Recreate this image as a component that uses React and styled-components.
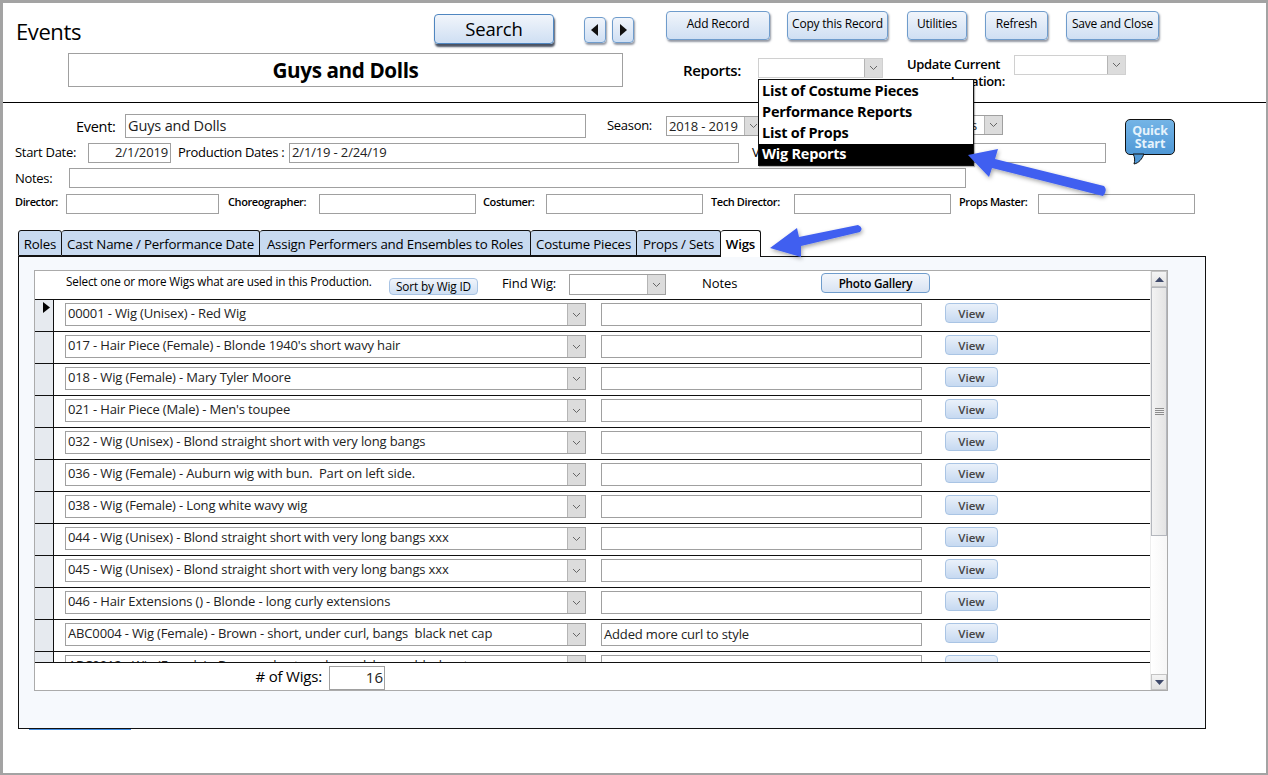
import React from 'react';
import styled, { createGlobalStyle } from 'styled-components';

const GlobalStyle = createGlobalStyle`
  html, body { margin: 0; padding: 0; background: #fff; }
  body { font-family: "Open Sans", "Noto Sans", sans-serif; color: #000; }
`;

const Frame = styled.div`
  position: relative;
  box-sizing: border-box;
  width: 1268px;
  height: 775px;
  overflow: hidden;
  background: #fff;
  border: solid #a3a3a3;
  border-width: 3px 2px 2px 3px;
`;

const Header = styled.header`
  box-sizing: border-box;
  height: 100px;
  border-bottom: 1px solid #000;
  display: flex;
`;

const HeaderLeft = styled.div`
  width: 663px;
  padding-left: 13px;
  box-sizing: border-box;
`;

const TitleRow = styled.div`
  display: flex;
  align-items: flex-start;
  height: 50px;
`;

const PageTitle = styled.h1`
  margin: 14px 0 0;
  width: 418px;
  font-size: 22px;
  line-height: 28px;
  font-weight: 500;
  letter-spacing: -0.4px;
`;

const RaisedButton = styled.button`
  box-sizing: border-box;
  padding: 0;
  font-family: inherit;
  color: #000;
  border: 1px solid #6f9ccc;
  border-radius: 4px;
  background: linear-gradient(#f1f5fb, #cfdff3);
  box-shadow: 1px 2px 2px rgba(60, 70, 90, 0.55);
`;

const SearchButton = styled(RaisedButton)`
  width: 120px;
  height: 30px;
  margin-top: 11px;
  padding-bottom: 2px;
  font-size: 18.5px;
  font-weight: 500;
  letter-spacing: -0.2px;
  border-color: #4f86c0;
  box-shadow: 1px 3px 2px rgba(30, 40, 60, 0.8);
`;

const NavGroup = styled.div`
  display: flex;
  gap: 6px;
  margin: 14px 0 0 30px;
`;

const NavButton = styled(RaisedButton)`
  width: 22px;
  height: 26px;
  display: flex;
  align-items: center;
  justify-content: center;
`;

const TitleBox = styled.div`
  box-sizing: border-box;
  width: 555px;
  height: 34px;
  margin-left: 52px;
  border: 1px solid #a0a0a0;
  font-size: 20.7px;
  font-weight: 700;
  line-height: 32px;
  letter-spacing: -0.4px;
  text-align: center;
`;

const HeaderRight = styled.div`
  flex: 1;
`;

const ActionRow = styled.div`
  display: flex;
  padding-top: 8px;
`;

const ActionButton = styled(RaisedButton)`
  width: ${p => p.$w}px;
  height: 29px;
  margin-right: ${p => p.$gap}px;
  padding-bottom: 4px;
  font-size: 12px;
  font-weight: 500;
  letter-spacing: -0.2px;
`;

const ReportsRow = styled.div`
  display: flex;
  align-items: flex-start;
  margin-top: 15px;
`;

const ReportsLabel = styled.div`
  margin: 5px 0 0 17px;
  width: 75px;
  font-size: 15px;
  line-height: 20px;
  font-weight: 600;
  letter-spacing: -0.3px;
`;

const Combo = styled.div`
  box-sizing: border-box;
  flex: none;
  display: flex;
  width: ${p => p.$w}px;
  height: ${p => p.$h || 20}px;
  margin-top: ${p => p.$top || 0}px;
  margin-left: ${p => p.$left || 0}px;
  border: 1px solid ${p => p.$soft ? '#d0d0d0' : '#a0a0a0'};
  background: #fff;
`;

const ComboText = styled.div`
  flex: 1;
  min-width: 0;
  padding: 0 ${p => p.$align === 'right' ? 7 : 0}px 0 2px;
  overflow: hidden;
  white-space: pre;
  font-size: ${p => p.$size || 13}px;
  line-height: ${p => p.$line || 18}px;
  letter-spacing: -0.15px;
  color: #222;
  text-align: ${p => p.$align || 'left'};
`;

const ComboArrow = styled.div`
  flex: 0 0 17px;
  display: flex;
  align-items: center;
  justify-content: center;
  background: #dcdcdc;
  border-left: 1px solid #b5b5b5;
`;

const UpdateLabel = styled.div`
  width: 98px;
  margin: 1px 9px 0 24px;
  font-size: 13px;
  line-height: 17px;
  font-weight: 600;
  letter-spacing: -0.35px;
  text-align: right;
  white-space: nowrap;
`;

const UpdateFirstLine = styled.div`
  padding-right: 5px;
`;

const FormArea = styled.section`
  padding: 11px 0 0 12px;
`;

const FormRow = styled.div`
  display: flex;
  align-items: flex-start;
  height: ${p => p.$h}px;
`;

const FieldLabel = styled.div`
  box-sizing: border-box;
  flex: none;
  width: ${p => p.$w}px;
  padding: ${p => p.$top || 0}px 0 0 ${p => p.$pad || 0}px;
  font-size: 13px;
  line-height: 18px;
  letter-spacing: -0.3px;
  white-space: nowrap;
  font-weight: 500;
`;

const SmallLabel = styled(FieldLabel)`
  font-size: 11px;
  line-height: 16px;
  font-weight: 600;
  letter-spacing: -0.4px;
`;

const EventLabel = styled(FieldLabel)`
  font-size: 14.5px;
  line-height: 20px;
`;

const Field = styled.div`
  box-sizing: border-box;
  flex: none;
  width: ${p => p.$w}px;
  height: ${p => p.$h || 20}px;
  margin-right: ${p => p.$gap || 0}px;
  padding: 0 2px;
  border: 1px solid #a0a0a0;
  background: #fff;
  white-space: pre;
  font-size: ${p => p.$size || 13}px;
  line-height: ${p => (p.$h || 20) - 3}px;
  letter-spacing: -0.15px;
  color: #222;
  text-align: ${p => p.$align || 'left'};
`;

const NoteField = styled(Field)`
  margin: 3px 0 0 15px;
`;

const QuickStart = styled.div`
  position: absolute;
  left: 1122px;
  top: 116px;
  width: 50px;
  height: 36px;
  box-sizing: border-box;
  padding-top: 4px;
  border: 1px solid #111;
  border-radius: 5px;
  background: linear-gradient(#74b4e6, #4f98d6);
  color: #e6f3fc;
  font-size: 12.5px;
  font-weight: 700;
  line-height: 13px;
  letter-spacing: -0.1px;
  text-align: center;
`;

const BubbleTail = styled.svg`
  position: absolute;
  left: 6px;
  top: 33px;
  overflow: visible;
`;

const ReportsMenu = styled.ul`
  position: absolute;
  left: 755px;
  top: 76px;
  width: 216px;
  margin: 0;
  padding: 1px 0 0;
  box-sizing: border-box;
  list-style: none;
  background: #fff;
  border: 1px solid #111;
  box-shadow: 1px 1px 1px rgba(0, 0, 0, 0.3);
`;

const MenuItem = styled.li`
  height: 21px;
  padding-left: 3px;
  font-size: 14.5px;
  font-weight: 700;
  line-height: 20px;
  letter-spacing: -0.22px;
  color: ${p => p.$active ? '#fff' : '#000'};
  background: ${p => p.$active ? '#000' : 'transparent'};
`;

const TabArea = styled.div`
  margin: 17px 0 0 15px;
  width: 1188px;
`;

const TabStrip = styled.div`
  display: flex;
  height: 26px;
`;

const Tab = styled.div`
  box-sizing: border-box;
  width: ${p => p.$w}px;
  height: ${p => p.$active ? 27 : 26}px;
  border: 1px solid #111;
  border-left-width: ${p => p.$first ? 1 : 0}px;
  border-bottom-width: ${p => p.$active ? 0 : 1}px;
  border-radius: 3px 3px 0 0;
  background: ${p => p.$active ? '#fff' : '#c8daf0'};
  position: relative;
  z-index: ${p => p.$active ? 2 : 0};
  font-size: 13.3px;
  font-weight: ${p => p.$active ? 600 : 500};
  line-height: 26px;
  letter-spacing: -0.2px;
  text-align: center;
  white-space: nowrap;
`;

const TabPanel = styled.div`
  box-sizing: border-box;
  height: 473px;
  padding: 13px 0 0 15px;
  background: #f6f9fd;
  border: 1px solid #111;
`;

const SubForm = styled.div`
  box-sizing: border-box;
  width: 1134px;
  height: 421px;
  display: flex;
  background: #fff;
  border: 1px solid #ababab;
`;

const SubBody = styled.div`
  flex: 1;
  min-width: 0;
  display: flex;
  flex-direction: column;
`;

const ListHead = styled.div`
  display: flex;
  align-items: flex-start;
  height: 28px;
  flex: none;
  border-bottom: 1px solid #111;
`;

const HeadNote = styled.div`
  width: 323px;
  padding: 2px 0 0 31px;
  box-sizing: content-box;
  font-size: 11.7px;
  line-height: 16px;
  letter-spacing: -0.15px;
  white-space: nowrap;
`;

const SortButton = styled(RaisedButton)`
  width: 89px;
  height: 17px;
  margin-top: 7px;
  margin-right: 1px;
  font-size: 11.8px;
  line-height: 15px;
  letter-spacing: -0.15px;
  border-color: #a9c4e4;
  box-shadow: none;
`;

const HeadLabel = styled.div`
  flex: none;
  width: ${p => p.$w}px;
  padding-left: ${p => p.$pad}px;
  box-sizing: border-box;
  margin-top: 3px;
  font-size: 13px;
  line-height: 18px;
  letter-spacing: -0.1px;
`;

const GalleryButton = styled(RaisedButton)`
  width: 109px;
  height: 20px;
  margin-top: 2px;
  font-size: 11.7px;
  font-weight: 600;
  line-height: 17px;
  letter-spacing: -0.2px;
  box-shadow: none;
  background: linear-gradient(#f3f6fb, #d8e3f3);
`;

const RowList = styled.div`
  flex: 1;
  min-height: 0;
  overflow: hidden;
`;

const WigRow = styled.div`
  box-sizing: border-box;
  height: 32px;
  display: flex;
  align-items: flex-start;
  border-bottom: 1px solid #111;
`;

const RowSelector = styled.div`
  box-sizing: border-box;
  flex: none;
  width: 19px;
  height: 31px;
  padding: 2px 0 0 8px;
  margin-right: 11px;
  background: #e6eaef;
  border-right: 1px solid #111;
`;

const CurrentRowMark = styled.svg`
  display: block;
`;

const ViewButton = styled(RaisedButton)`
  width: 53px;
  height: 20px;
  margin: 3px 0 0 23px;
  font-size: 11.5px;
  font-weight: 600;
  line-height: 17px;
  color: #444;
  border-color: #a9c4e4;
  box-shadow: none;
  background: linear-gradient(#eaf1fa, #c6d9f1);
`;

const ListFoot = styled.div`
  flex: none;
  height: 28px;
  display: flex;
  align-items: flex-start;
  box-sizing: border-box;
  border-top: 1px solid #111;
`;

const FootLabel = styled.div`
  width: 294px;
  padding-right: 7px;
  box-sizing: border-box;
  margin-top: 3px;
  font-size: 15px;
  line-height: 20px;
  letter-spacing: -0.2px;
  text-align: right;
`;

const FootValue = styled.div`
  box-sizing: border-box;
  width: 56px;
  height: 24px;
  margin-top: 3px;
  padding-right: 1px;
  border: 1px solid #a0a0a0;
  font-size: 15px;
  line-height: 20px;
  text-align: right;
  color: #222;
`;

const ScrollBar = styled.div`
  flex: 0 0 17px;
  display: flex;
  flex-direction: column;
  box-sizing: border-box;
  background: linear-gradient(90deg, #ffffff, #f6f6f6);
  border-left: 1px solid #eee;
`;

const ScrollEnd = styled.div`
  box-sizing: border-box;
  flex: none;
  height: 16px;
  display: flex;
  align-items: center;
  justify-content: center;
  background: linear-gradient(#f4f4f4, #e2e2e2);
  border: 1px solid #c4c4c4;
`;

const ScrollThumb = styled.div`
  flex: none;
  box-sizing: border-box;
  height: 249px;
  display: flex;
  align-items: center;
  justify-content: center;
  background: linear-gradient(90deg, #f3f3f3, #e4e4e4);
  border: 1px solid #b4b7bd;
`;

const ScrollTrack = styled.div`
  flex: 1;
`;

const Grip = styled.div`
  width: 9px;
  height: 7px;
  background: repeating-linear-gradient(#8c8c8c 0 1px, #eee 1px 2px);
`;

const Callouts = styled.svg`
  position: absolute;
  left: -3px;
  top: -3px;
  pointer-events: none;
  overflow: visible;
`;

const TopNotch = styled.div`
  position: absolute;
  left: 318px;
  top: -3px;
  width: 75px;
  height: 2px;
  background: #e2dccc;
`;

const UnderLine = styled.div`
  position: absolute;
  left: 26px;
  top: 726px;
  width: 102px;
  height: 1px;
  background: #3f8ae0;
`;

const Chevron = () => (
  <svg width="9" height="6" viewBox="0 0 9 6">
    <path d="M1 1l3.5 3.5L8 1" fill="none" stroke="#666" strokeWidth="1" />
  </svg>
);

const Select = ({ w, h, top, left, soft, text, size, line, align }) => (
  <Combo $w={w} $h={h} $top={top} $left={left} $soft={soft}>
    <ComboText $size={size} $line={line} $align={align}>{text}</ComboText>
    <ComboArrow><Chevron /></ComboArrow>
  </Combo>
);

const wigs = [
  ['00001 - Wig (Unisex) - Red Wig', ''],
  ["017 - Hair Piece (Female) - Blonde 1940's short wavy hair", ''],
  ['018 - Wig (Female) - Mary Tyler Moore', ''],
  ["021 - Hair Piece (Male) - Men's toupee", ''],
  ['032 - Wig (Unisex) - Blond straight short with very long bangs', ''],
  ['036 - Wig (Female) - Auburn wig with bun.  Part on left side.', ''],
  ['038 - Wig (Female) - Long white wavy wig', ''],
  ['044 - Wig (Unisex) - Blond straight short with very long bangs xxx', ''],
  ['045 - Wig (Unisex) - Blond straight short with very long bangs xxx', ''],
  ['046 - Hair Extensions () - Blonde - long curly extensions', ''],
  ['ABC0004 - Wig (Female) - Brown - short, under curl, bangs  black net cap', 'Added more curl to style'],
  ['ABC0012 - Wig (Female) - Brown - short, under curl, bangs  black net cap', ''],
];

const tabs = [
  ['Roles', 44],
  ['Cast Name / Performance Date', 198],
  ['Assign Performers and Ensembles to Roles', 271],
  ['Costume Pieces', 106],
  ['Props / Sets', 84],
  ['Wigs', 40],
];

const actions = [
  ['Add Record', 104, 17],
  ['Copy this Record', 101, 19],
  ['Utilities', 60, 18],
  ['Refresh', 63, 18],
  ['Save and Close', 93, 0],
];

export default function App() {
  return (
    <>
      <GlobalStyle />
      <Frame>
        <TopNotch />
        <Header>
          <HeaderLeft>
            <TitleRow>
              <PageTitle>Events</PageTitle>
              <SearchButton>Search</SearchButton>
              <NavGroup>
                <NavButton>
                  <svg width="8" height="12" viewBox="0 0 8 12"><path d="M7 0v12L0 6z" fill="#111" /></svg>
                </NavButton>
                <NavButton>
                  <svg width="8" height="12" viewBox="0 0 8 12"><path d="M1 0v12l7-6z" fill="#111" /></svg>
                </NavButton>
              </NavGroup>
            </TitleRow>
            <TitleBox>Guys and Dolls</TitleBox>
          </HeaderLeft>
          <HeaderRight>
            <ActionRow>
              {actions.map(([label, w, gap]) => (
                <ActionButton key={label} $w={w} $gap={gap}>{label}</ActionButton>
              ))}
            </ActionRow>
            <ReportsRow>
              <ReportsLabel>Reports:</ReportsLabel>
              <Select w={125} top={3} soft />
              <UpdateLabel>
                <UpdateFirstLine>Update Current</UpdateFirstLine>
                Location:
              </UpdateLabel>
              <Select w={112} soft />
            </ReportsRow>
          </HeaderRight>
        </Header>

        <FormArea>
          <FormRow $h={29}>
            <EventLabel $w={110} $pad={61} $top={3}>Event:</EventLabel>
            <Field $w={461} $h={24} $size={14.5} $gap={21}>Guys and Dolls</Field>
            <FieldLabel $w={59} $top={2}>Season:</FieldLabel>
            <Select w={97} top={2} text="2018 - 2019" />
            <Select w={216} top={1} left={24} text="Performances" align="right" />
          </FormRow>
          <FormRow $h={25}>
            <FieldLabel $w={73}>Start Date:</FieldLabel>
            <Field $w={83} $align="right" $gap={7}>2/1/2019</Field>
            <FieldLabel $w={111}>Production Dates :</FieldLabel>
            <Field $w={450} $gap={13}>2/1/19 - 2/24/19</Field>
            <FieldLabel $w={52}>Venue:</FieldLabel>
            <Field $w={302} />
          </FormRow>
          <FormRow $h={26}>
            <FieldLabel $w={54} $top={1}>Notes:</FieldLabel>
            <Field $w={897} />
          </FormRow>
          <FormRow $h={19}>
            <SmallLabel $w={51}>Director:</SmallLabel>
            <Field $w={153} $gap={9} />
            <SmallLabel $w={91}>Choreographer:</SmallLabel>
            <Field $w={157} $gap={7} />
            <SmallLabel $w={63}>Costumer:</SmallLabel>
            <Field $w={157} $gap={8} />
            <SmallLabel $w={83}>Tech Director:</SmallLabel>
            <Field $w={157} $gap={8} />
            <SmallLabel $w={79}>Props Master:</SmallLabel>
            <Field $w={157} />
          </FormRow>
        </FormArea>

        <TabArea>
          <TabStrip>
            {tabs.map(([label, w], i) => (
              <Tab key={label} $w={w} $first={i === 0} $active={label === 'Wigs'}>{label}</Tab>
            ))}
          </TabStrip>
          <TabPanel>
            <SubForm>
              <SubBody>
                <ListHead>
                  <HeadNote>Select one or more Wigs what are used in this Production.</HeadNote>
                  <SortButton>Sort by Wig ID</SortButton>
                  <HeadLabel $w={90} $pad={23}>Find Wig:</HeadLabel>
                  <Select w={97} h={21} top={3} />
                  <HeadLabel $w={155} $pad={36}>Notes</HeadLabel>
                  <GalleryButton>Photo Gallery</GalleryButton>
                </ListHead>
                <RowList>
                  {wigs.map(([name, note], i) => (
                    <WigRow key={name}>
                      <RowSelector>
                        {i === 0 && (
                          <CurrentRowMark width="7" height="11" viewBox="0 0 7 11"><path d="M0 0v11l7-5.5z" fill="#000" /></CurrentRowMark>
                        )}
                      </RowSelector>
                      <Select w={521} h={23} top={3} text={name} line={18} />
                      <NoteField $w={321} $h={23}>{note}</NoteField>
                      <ViewButton>View</ViewButton>
                    </WigRow>
                  ))}
                </RowList>
                <ListFoot>
                  <FootLabel># of Wigs:</FootLabel>
                  <FootValue>16</FootValue>
                </ListFoot>
              </SubBody>
              <ScrollBar>
                <ScrollEnd>
                  <svg width="9" height="5" viewBox="0 0 9 5"><path d="M4.5 0L9 5H0z" fill="#3f4a6b" /></svg>
                </ScrollEnd>
                <ScrollThumb><Grip /></ScrollThumb>
                <ScrollTrack />
                <ScrollEnd>
                  <svg width="9" height="5" viewBox="0 0 9 5"><path d="M0 0h9L4.5 5z" fill="#3f4a6b" /></svg>
                </ScrollEnd>
              </ScrollBar>
            </SubForm>
          </TabPanel>
        </TabArea>

        <UnderLine />

        <QuickStart>
          Quick<br />Start
          <BubbleTail width="14" height="14" viewBox="0 0 14 14">
            <path d="M1 1h11C10 6 7 10 2 11 3 8 3 4 1 1z" fill="#4f98d6" stroke="#111" strokeWidth="1" />
          </BubbleTail>
        </QuickStart>

        <ReportsMenu>
          <MenuItem>List of Costume Pieces</MenuItem>
          <MenuItem>Performance Reports</MenuItem>
          <MenuItem>List of Props</MenuItem>
          <MenuItem $active>Wig Reports</MenuItem>
        </ReportsMenu>

        <Callouts width="1268" height="775" viewBox="0 0 1268 775">
          <defs>
            <filter id="arrowShadow" x="-20%" y="-20%" width="140%" height="150%">
              <feDropShadow dx="1" dy="2" stdDeviation="2" floodColor="#000" floodOpacity="0.35" />
            </filter>
          </defs>
          <g filter="url(#arrowShadow)" fill="#3f5ff0">
            <path d="M968 155L998 149 995 159 1104 186Q1108 190 1103 196L992 168 989 177z" />
            <path d="M770 248L797 228 799 237 858 225Q864 228 860 232L801 246 801 257z" />
          </g>
        </Callouts>
      </Frame>
    </>
  );
}
